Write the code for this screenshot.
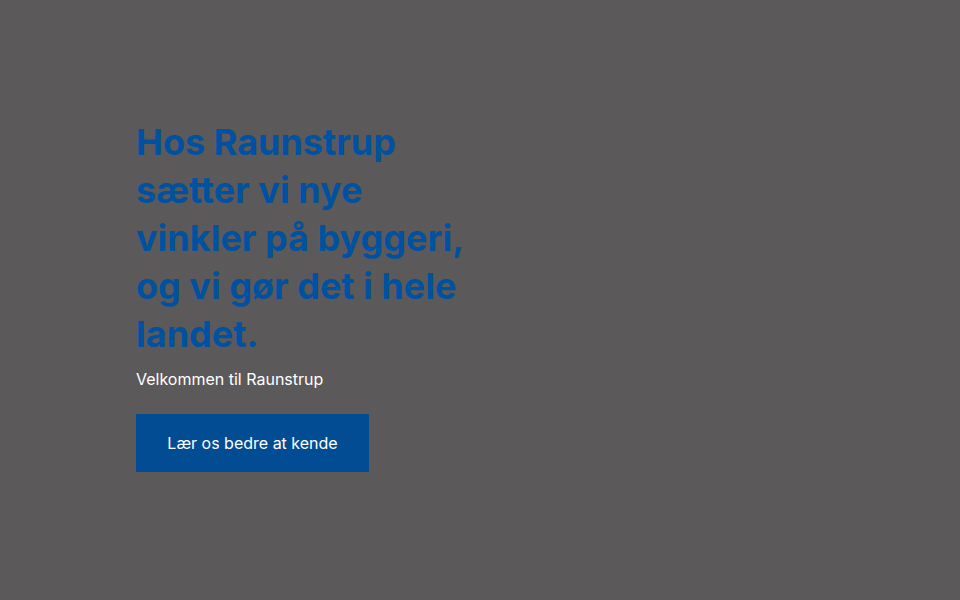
import React from "react";

function App() {
  return (
    <div className="min-h-screen w-full bg-[#5c595a] font-['Inter',sans-serif]">
      <div className="px-[136px] pt-[118px]">
        <h1 className="max-w-[340px] text-[36px] font-bold leading-[48px] text-[#0052a0]">
          Hos Raunstrup sætter vi nye vinkler på byggeri, og vi gør det i hele landet.
        </h1>
        <p className="mt-[9px] text-[16px] leading-[24px] text-white">Velkommen til Raunstrup</p>
        <button className="mt-[23px] h-[58px] w-[233px] bg-[#014c92] text-[16px] text-white">
          Lær os bedre at kende
        </button>
      </div>
    </div>
  );
}

export default App;
